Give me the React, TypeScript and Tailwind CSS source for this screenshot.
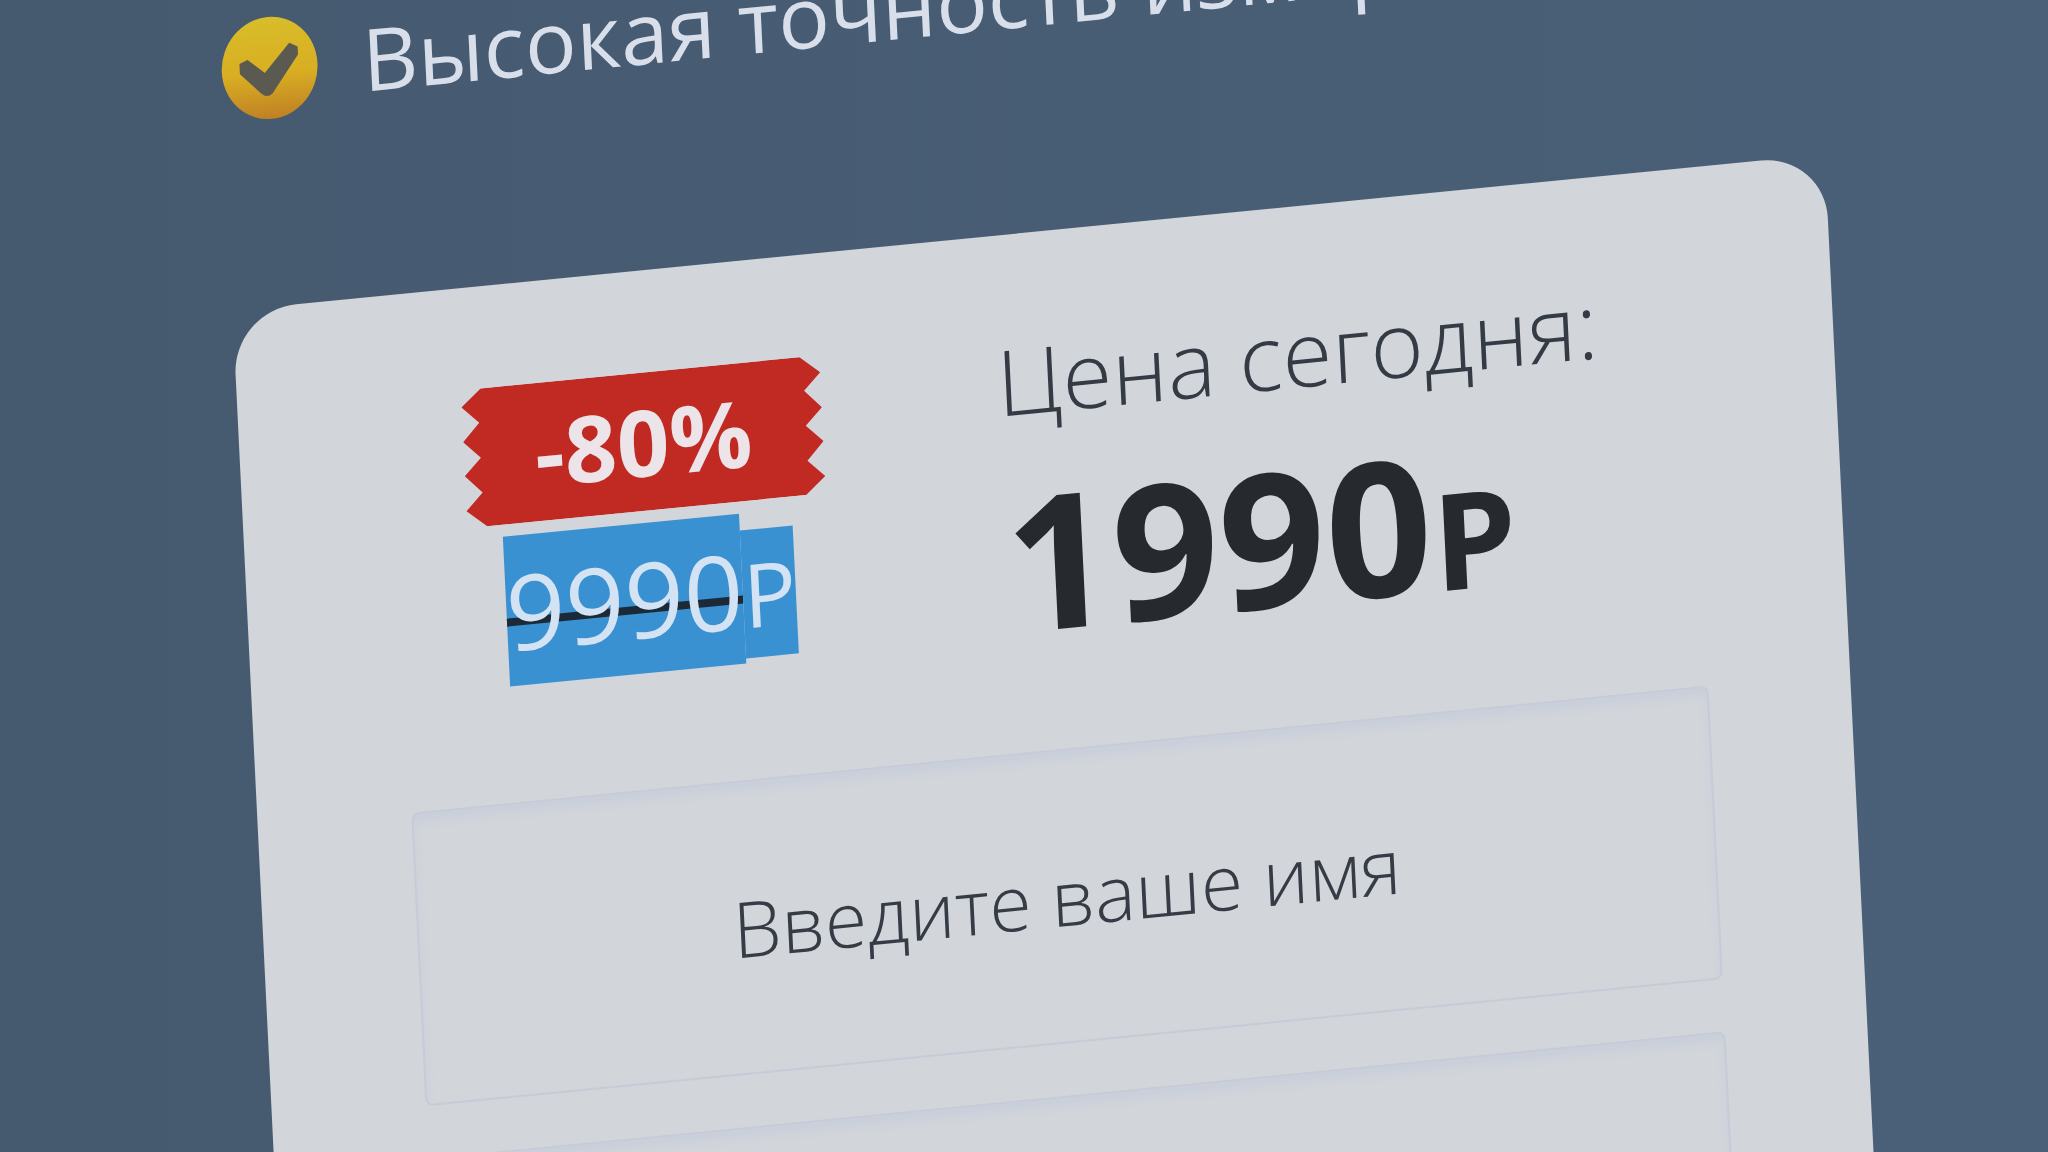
import type { ReactNode } from 'react';

function CheckBadge() {
  return (
    <svg viewBox="0 0 98 104" className="h-[104px] w-[98px] shrink-0" aria-hidden="true">
      <defs>
        <linearGradient id="badge" x1="0" y1="0" x2="0" y2="1">
          <stop offset="0" stopColor="#d8bd2a" />
          <stop offset="0.55" stopColor="#d9ae22" />
          <stop offset="1" stopColor="#c08024" />
        </linearGradient>
      </defs>
      <ellipse cx="49" cy="52" rx="48" ry="51" fill="url(#badge)" />
      <path d="M20 46 L27 43 L44 58 L70 30 L77 34 L77 41 L50 77 Q45 81 40 76 L20 55 Z" fill="#5b5a50" stroke="#5b5a50" strokeWidth="2" strokeLinejoin="round" />
    </svg>
  );
}

function DiscountTicket({ children }: { children: ReactNode }) {
  return (
    <div className="relative flex h-[138px] w-full items-center justify-center">
      <svg viewBox="0 0 360 138" preserveAspectRatio="none" className="absolute inset-0 h-full w-full" aria-hidden="true">
        <path
          d="M20 0 H340 L360 17 L343 34 L360 52 L343 69 L360 86 L343 104 L360 121 L340 138 H20 L0 121 L17 104 L0 86 L17 69 L0 52 L17 34 L0 17 Z"
          fill="#c02a22"
        />
      </svg>
      <span className="relative text-[92px] leading-none font-bold text-[#ece4e8]">{children}</span>
    </div>
  );
}

function OldPrice() {
  return (
    <div className="flex items-baseline justify-center leading-none text-[#d3e3f4]">
      {/* the strike runs behind the digits */}
      <s className="bg-[#3a91d1] bg-[linear-gradient(#1c2a38,#1c2a38)] bg-[length:100%_8px] bg-[position:0_58%] bg-no-repeat text-[104px] leading-[150px] no-underline">
        9990
      </s>
      <span className="bg-[#3a91d1] text-[88px] leading-[128px]">Р</span>
    </div>
  );
}

function Field({ id, label, placeholder }: { id: string; label: string; placeholder?: string }) {
  return (
    <input
      id={id}
      type="text"
      aria-label={label}
      placeholder={placeholder}
      className="h-[294px] w-full rounded-lg border-2 border-[#c6cbd7] bg-transparent text-center text-[77px] font-light text-[#363c45] shadow-[inset_0_8px_8px_#c9cfdb] outline-none placeholder:text-[#363c45] placeholder:opacity-100"
    />
  );
}

export default function App() {
  return (
    <div className="h-screen overflow-hidden bg-linear-to-r from-[#455a6f] to-[#4a6078] font-['Open_Sans','Noto_Sans',sans-serif]">
      <main className="origin-top-left -rotate-[2.8deg] -skew-y-[2.8deg] pt-[34px] pr-[233px] pl-[217px]">
        <ul>
          <li className="flex h-[120px] items-center gap-11 text-[86px] leading-[120px] whitespace-nowrap text-[#d8dfea]">
            <CheckBadge />
            Высокая точность измер
          </li>
        </ul>

        <section className="mt-[178px] rounded-[64px] bg-[#d2d5da] pt-[86px] pr-[142px] pb-24 pl-[154px]">
          <div className="flex items-start gap-44 pl-[70px]">
            <div className="flex w-[360px] shrink-0 flex-col gap-3 pt-4">
              <DiscountTicket>-80%</DiscountTicket>
              <OldPrice />
            </div>
            <div className="flex flex-col gap-6 whitespace-nowrap">
              <p className="text-[91px] leading-[120px] font-light text-[#343b45]">Цена сегодня:</p>
              <p className="text-[187px] leading-[192px] font-bold text-[#26292e]">
                1990<span className="text-[134px] leading-none">Р</span>
              </p>
            </div>
          </div>

          <form className="mt-24 flex flex-col gap-[52px]">
            <Field id="name" label="Имя" placeholder="Введите ваше имя" />
            <Field id="phone" label="Телефон" />
          </form>
        </section>
      </main>
    </div>
  );
}
